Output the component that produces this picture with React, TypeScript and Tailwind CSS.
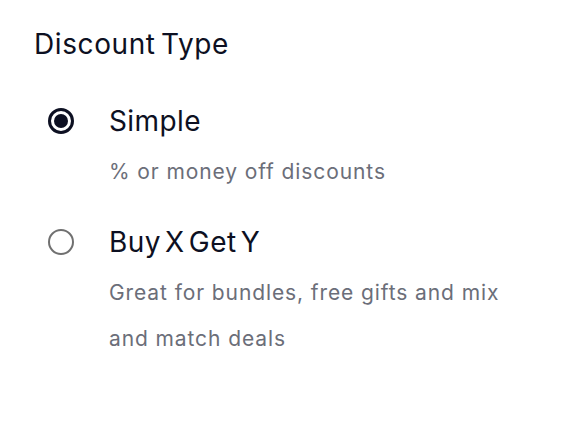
const options = [
  {
    id: 'simple',
    title: 'Simple',
    description: '% or money off discounts',
    checked: true,
  },
  {
    id: 'bxgy',
    title: 'Buy X Get Y',
    description: 'Great for bundles, free gifts and mix and match deals',
    checked: false,
  },
]

const Radio = ({ checked }: { checked: boolean }) => {
  if (checked) {
    return (
      <span className="flex h-[26px] w-[26px] shrink-0 items-center justify-center rounded-full border-[3px] border-[#0d1022]">
        <span className="h-[14px] w-[14px] rounded-full bg-[#0d1022]" />
      </span>
    )
  }
  return (
    <span className="h-[26px] w-[26px] shrink-0 rounded-full border-2 border-[#707070]" />
  )
}

export default function App() {
  return (
    <div className="h-[436px] w-[588px] bg-white px-[34px] pt-[26px] font-['Inter',sans-serif] text-[#0d1022]">
      <h2 className="text-[28px] leading-[36px] tracking-[0.6px] [word-spacing:-3px]">
        Discount Type
      </h2>

      <div className="mt-[41px] flex flex-col gap-[29px]">
        {options.map((option) => (
          <label key={option.id} className="flex flex-col">
            <div className="flex items-center gap-[35px] pl-[14px]">
              <Radio checked={option.checked} />
              <span className="text-[28px] leading-[36px] tracking-[0.4px] [word-spacing:-4px]">
                {option.title}
              </span>
            </div>
            <p className="mt-[10px] w-[500px] pl-[75px] text-[21px] leading-[46px] tracking-[0.9px] text-[#6b6e79]">
              {option.description}
            </p>
          </label>
        ))}
      </div>
    </div>
  )
}
